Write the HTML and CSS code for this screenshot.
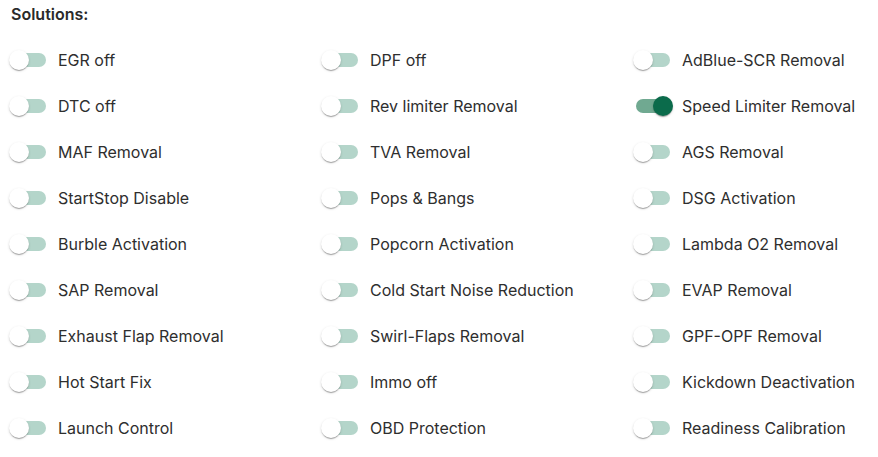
FILE: index.html
```html
<!DOCTYPE html>
<html>
<head>
<meta charset="utf-8">
<link rel="stylesheet" href="styles.css">
</head>
<body>
<div class="panel">
  <div class="title">Solutions:</div>
  <div class="grid">
    <label class="item"><span class="sw"><span class="track"></span><span class="thumb"></span></span><span class="lbl">EGR off</span></label>
    <label class="item"><span class="sw"><span class="track"></span><span class="thumb"></span></span><span class="lbl">DPF off</span></label>
    <label class="item"><span class="sw"><span class="track"></span><span class="thumb"></span></span><span class="lbl">AdBlue-SCR Removal</span></label>

    <label class="item"><span class="sw"><span class="track"></span><span class="thumb"></span></span><span class="lbl">DTC off</span></label>
    <label class="item"><span class="sw"><span class="track"></span><span class="thumb"></span></span><span class="lbl">Rev limiter Removal</span></label>
    <label class="item"><span class="sw on"><span class="track"></span><span class="thumb"></span></span><span class="lbl">Speed Limiter Removal</span></label>

    <label class="item"><span class="sw"><span class="track"></span><span class="thumb"></span></span><span class="lbl">MAF Removal</span></label>
    <label class="item"><span class="sw"><span class="track"></span><span class="thumb"></span></span><span class="lbl">TVA Removal</span></label>
    <label class="item"><span class="sw"><span class="track"></span><span class="thumb"></span></span><span class="lbl">AGS Removal</span></label>

    <label class="item"><span class="sw"><span class="track"></span><span class="thumb"></span></span><span class="lbl">StartStop Disable</span></label>
    <label class="item"><span class="sw"><span class="track"></span><span class="thumb"></span></span><span class="lbl">Pops &amp; Bangs</span></label>
    <label class="item"><span class="sw"><span class="track"></span><span class="thumb"></span></span><span class="lbl">DSG Activation</span></label>

    <label class="item"><span class="sw"><span class="track"></span><span class="thumb"></span></span><span class="lbl">Burble Activation</span></label>
    <label class="item"><span class="sw"><span class="track"></span><span class="thumb"></span></span><span class="lbl">Popcorn Activation</span></label>
    <label class="item"><span class="sw"><span class="track"></span><span class="thumb"></span></span><span class="lbl">Lambda O2 Removal</span></label>

    <label class="item"><span class="sw"><span class="track"></span><span class="thumb"></span></span><span class="lbl">SAP Removal</span></label>
    <label class="item"><span class="sw"><span class="track"></span><span class="thumb"></span></span><span class="lbl">Cold Start Noise Reduction</span></label>
    <label class="item"><span class="sw"><span class="track"></span><span class="thumb"></span></span><span class="lbl">EVAP Removal</span></label>

    <label class="item"><span class="sw"><span class="track"></span><span class="thumb"></span></span><span class="lbl">Exhaust Flap Removal</span></label>
    <label class="item"><span class="sw"><span class="track"></span><span class="thumb"></span></span><span class="lbl">Swirl-Flaps Removal</span></label>
    <label class="item"><span class="sw"><span class="track"></span><span class="thumb"></span></span><span class="lbl">GPF-OPF Removal</span></label>

    <label class="item"><span class="sw"><span class="track"></span><span class="thumb"></span></span><span class="lbl">Hot Start Fix</span></label>
    <label class="item"><span class="sw"><span class="track"></span><span class="thumb"></span></span><span class="lbl">Immo off</span></label>
    <label class="item"><span class="sw"><span class="track"></span><span class="thumb"></span></span><span class="lbl">Kickdown Deactivation</span></label>

    <label class="item"><span class="sw"><span class="track"></span><span class="thumb"></span></span><span class="lbl">Launch Control</span></label>
    <label class="item"><span class="sw"><span class="track"></span><span class="thumb"></span></span><span class="lbl">OBD Protection</span></label>
    <label class="item"><span class="sw"><span class="track"></span><span class="thumb"></span></span><span class="lbl">Readiness Calibration</span></label>
  </div>
</div>
</body>
</html>
```

FILE: styles.css
```css
html, body {
  margin: 0;
  padding: 0;
  background: #ffffff;
}
body {
  font-family: Inter, "Noto Sans", sans-serif;
  color: #2b2b2b;
  width: 878px;
  height: 457px;
  overflow: hidden;
}
.panel {
  padding: 5px 0 0 0;
}
.title {
  font-size: 16px;
  font-weight: 600;
  line-height: 19px;
  margin-left: 11px;
  color: #2a2a2a;
}
.grid {
  display: grid;
  grid-template-columns: 312px 312px 1fr;
  row-gap: 8px;
  margin-top: 17px;
}
.item {
  display: flex;
  align-items: center;
  height: 38px;
}
.sw {
  position: relative;
  width: 58px;
  height: 38px;
  flex: none;
}
.track {
  position: absolute;
  left: 12px;
  top: 12px;
  width: 34px;
  height: 14px;
  border-radius: 7px;
  background: #b4d5ca;
}
.thumb {
  position: absolute;
  left: 9px;
  top: 9px;
  width: 20px;
  height: 20px;
  border-radius: 50%;
  background: #ffffff;
  box-shadow: 0 2px 1px -1px rgba(0,0,0,0.2), 0 1px 1px 0 rgba(0,0,0,0.14), 0 1px 3px 0 rgba(0,0,0,0.12);
}
.sw.on .track {
  background: #70a991;
}
.sw.on .thumb {
  left: 29px;
  background: #0b6b4b;
}
.lbl {
  font-size: 16px;
  line-height: 24px;
  color: #2e2e2e;
}
```
